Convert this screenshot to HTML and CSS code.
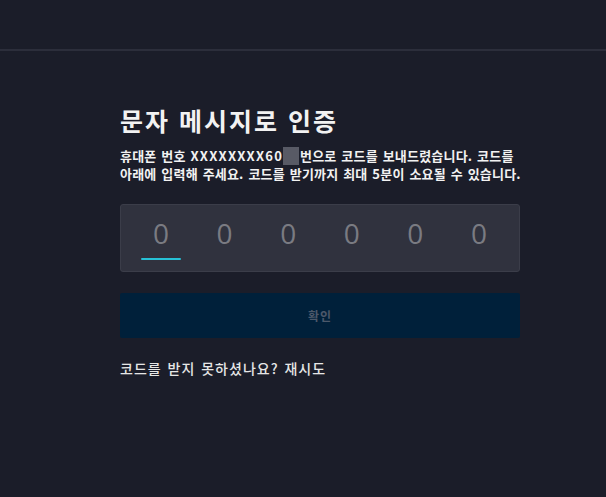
FILE: index.html
```html
<!DOCTYPE html>
<html lang="ko">
<head>
    <meta charset="UTF-8">
    <meta name="viewport" content="width=device-width, initial-scale=1.0">
    <title>문자 메시지로 인증</title>
    <link rel="stylesheet" href="styles.css">
</head>
<body>

    <header class="topbar"></header>

    <main class="container">
        <h1>문자 메시지로 인증</h1>
        <p class="desc">휴대폰 번호 <span class="latin">XXXXXXXX60</span><span class="masked"></span>번으로 코드를 보내드렸습니다. 코드를<br>아래에 입력해 주세요. 코드를 받기까지 최대 5분이 소요될 수 있습니다.</p>

        <div class="code-box">
            <div class="digit active">0</div>
            <div class="digit">0</div>
            <div class="digit">0</div>
            <div class="digit">0</div>
            <div class="digit">0</div>
            <div class="digit">0</div>
        </div>

        <button type="button" class="confirm" disabled>확인</button>

        <p class="retry">코드를 받지 못하셨나요? 재시도</p>
    </main>

</body>
</html>
```

FILE: styles.css
```css
body {
    margin: 0;
    background-color: #1b1d29;
    font-family: "Noto Sans CJK KR", "Noto Sans", sans-serif;
    color: #f2f2f2;
}

.topbar {
    height: 49px;
    border-bottom: 2px solid #2c2e3b;
}

.container {
    width: 400px;
    margin-left: 120px;
    padding-top: 52px;
}

h1 {
    margin: 0;
    font-size: 25px;
    font-weight: 700;
    line-height: 34px;
    letter-spacing: 2px;
}

.desc {
    margin: 10px 0 0;
    font-size: 13px;
    font-weight: 700;
    line-height: 18px;
    letter-spacing: 0.2px;
    word-spacing: 1px;
    white-space: nowrap;
}

.desc .latin {
    letter-spacing: 1.2px;
}

.masked {
    display: inline-block;
    width: 16px;
    height: 18px;
    margin: 0 1px 0 0;
    vertical-align: -4px;
    background-color: #585a65;
}

.code-box {
    display: flex;
    justify-content: space-between;
    height: 66px;
    margin-top: 21px;
    padding: 0 20px;
    background-color: #30323e;
    border: 1px solid #3b3d49;
    border-radius: 3px;
}

.digit {
    position: relative;
    width: 40px;
    padding-top: 8px;
    text-align: center;
    font-family: "Open Sans", "Noto Sans", sans-serif;
    font-size: 28px;
    line-height: 40px;
    color: #7a7b82;
}

.digit.active::after {
    content: "";
    position: absolute;
    left: 0;
    right: 0;
    top: 53px;
    height: 2px;
    border-radius: 1px;
    background-color: #27c1d6;
}

.confirm {
    display: block;
    width: 100%;
    height: 45px;
    margin-top: 21px;
    border: none;
    border-radius: 2px;
    background-color: #00203a;
    color: #4c586a;
    font-family: inherit;
    font-size: 12px;
    font-weight: 700;
    letter-spacing: 1px;
}

.retry {
    margin: 20px 0 0;
    font-size: 14px;
    font-weight: 500;
    letter-spacing: 1px;
    word-spacing: 1px;
    color: #e6e6e6;
}
```
